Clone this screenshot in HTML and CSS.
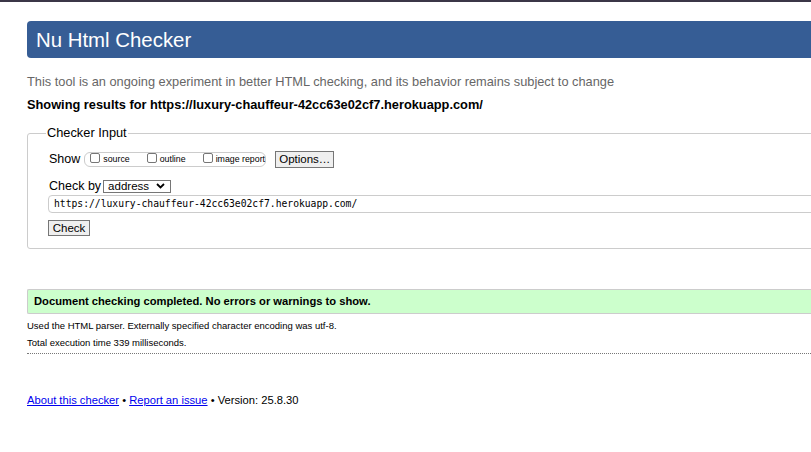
FILE: index.html
```html
<!DOCTYPE html>
<html>
<head>
<meta charset="utf-8">
<title>Nu Html Checker</title>
<link rel="stylesheet" href="styles.css">
</head>
<body>
<div class="topbar"></div>
<div class="page">
  <h1 class="title">Nu Html Checker</h1>
  <p class="intro">This tool is an ongoing experiment in better HTML checking, and its behavior remains subject to change</p>
  <p class="showing">Showing results for https://luxury-chauffeur-42cc63e02cf7.herokuapp.com/</p>
  <fieldset class="input-box">
    <legend>Checker Input</legend>
    <div class="row show-row">
      <span class="lbl">Show</span>
      <span class="opts">
        <label><span class="cb"></span>source</label>
        <label><span class="cb"></span>outline</label>
        <label><span class="cb"></span>image report</label>
      </span>
      <span class="btn opt-btn">Options…</span>
    </div>
    <div class="row by-row">
      <span class="lbl">Check by</span>
      <span class="select">address<svg width="9" height="6" viewBox="0 0 9 6"><path d="M1 1 L4.5 4.5 L8 1" fill="none" stroke="#000" stroke-width="1.8"/></svg></span>
    </div>
    <div class="url">https://luxury-chauffeur-42cc63e02cf7.herokuapp.com/</div>
    <span class="btn check-btn">Check</span>
  </fieldset>
  <p class="success">Document checking completed. No errors or warnings to show.</p>
  <p class="details">Used the HTML parser. Externally specified character encoding was utf-8.</p>
  <p class="details">Total execution time 339 milliseconds.</p>
  <hr class="dots">
  <p class="footer"><a href="#">About this checker</a> • <a href="#">Report an issue</a> • Version: 25.8.30</p>
</div>
</body>
</html>
```
FILE: styles.css
```css
html, body {
  margin: 0;
  padding: 0;
  overflow: hidden;
  background: #fff;
}
body {
  font-family: "Liberation Sans", Arial, sans-serif;
  color: #000;
}
.topbar {
  height: 2px;
  background: #3b3647;
}
.page {
  padding: 19px 0 0 27px;
  width: 1100px;
}
.title {
  margin: 0;
  height: 37px;
  background: #365d95;
  color: #fff;
  font-weight: normal;
  font-size: 20.4px;
  line-height: 38px;
  padding-left: 9px;
  border-radius: 4px;
}
.intro {
  margin: 16px 0 0;
  font-size: 12.8px;
  color: #666;
  line-height: 16px;
}
.showing {
  margin: 7px 0 0;
  font-size: 12.8px;
  font-weight: bold;
  line-height: 16px;
}
.input-box {
  margin: 12px 0 0;
  border: 1px solid #ccc;
  border-radius: 3px;
  padding: 0 0 12px 21px;
  min-width: 0;
}
.input-box legend {
  font-size: 12.8px;
  padding: 0 1px;
  margin-left: -3px;
  line-height: 16px;
}
.row {
  display: flex;
  align-items: center;
}
.lbl {
  font-size: 12.5px;
  white-space: nowrap;
}
.show-row {
  margin-top: 10px;
  height: 16px;
}
.show-row .lbl {
  margin-right: 4px;
}
.opts {
  display: flex;
  align-items: center;
  flex-shrink: 0;
  border: 1px solid #ccc;
  border-radius: 6px;
  height: 15px;
  width: 182px;
  box-sizing: border-box;
  padding: 0 0 0 5px;
}
.opts label {
  display: flex;
  align-items: center;
  white-space: nowrap;
  flex-shrink: 0;
  font-size: 8.8px;
  color: #000;
  margin-right: 17px;
}
.opts label:last-child {
  margin-right: 0;
}
.cb {
  width: 10px;
  height: 10px;
  border: 1px solid #767676;
  border-radius: 2px;
  margin-right: 3px;
  box-sizing: border-box;
  position: relative;
  top: -1px;
  flex-shrink: 0;
}
.btn {
  display: inline-flex;
  align-items: center;
  justify-content: center;
  background: #efefef;
  border: 1px solid #767676;
  font-size: 11.5px;
  box-sizing: border-box;
  white-space: nowrap;
  flex-shrink: 0;
}
.opt-btn {
  margin-left: 9px;
  width: 59px;
  height: 17px;
}
.by-row {
  margin-top: 12px;
  height: 14px;
}
.by-row .lbl {
  margin-right: 2px;
}
.select {
  display: inline-flex;
  align-items: center;
  justify-content: space-between;
  width: 68px;
  height: 13px;
  box-sizing: border-box;
  border: 1px solid #767676;
  font-size: 11.5px;
  padding: 0 5px 0 4px;
}
.url {
  margin: 2px 0 0 -1px;
  height: 18px;
  box-sizing: border-box;
  border: 1px solid #ccc;
  border-radius: 4px;
  font-family: "DejaVu Sans Mono", monospace;
  font-size: 9.7px;
  line-height: 16px;
  padding-left: 5px;
}
.check-btn {
  margin: 7px 0 0 -1px;
  width: 42px;
  height: 16px;
}
.success {
  margin: 40px 0 0;
  height: 25px;
  box-sizing: border-box;
  background: #ccffcc;
  border: 1px solid #ccc;
  border-right: none;
  border-radius: 2px 0 0 2px;
  font-size: 11.2px;
  font-weight: bold;
  line-height: 23px;
  padding-left: 6px;
}
.details {
  margin: 6px 0 0;
  font-size: 9.5px;
  line-height: 11px;
}
.details + .details {
  margin-top: 6px;
}
.dots {
  margin: 5px 0 0;
  border: none;
  border-top: 1px dotted #777;
  height: 0;
}
.footer {
  margin: 39px 0 0;
  font-size: 11.2px;
  line-height: 14px;
}
.footer a {
  color: #00e;
}
```
